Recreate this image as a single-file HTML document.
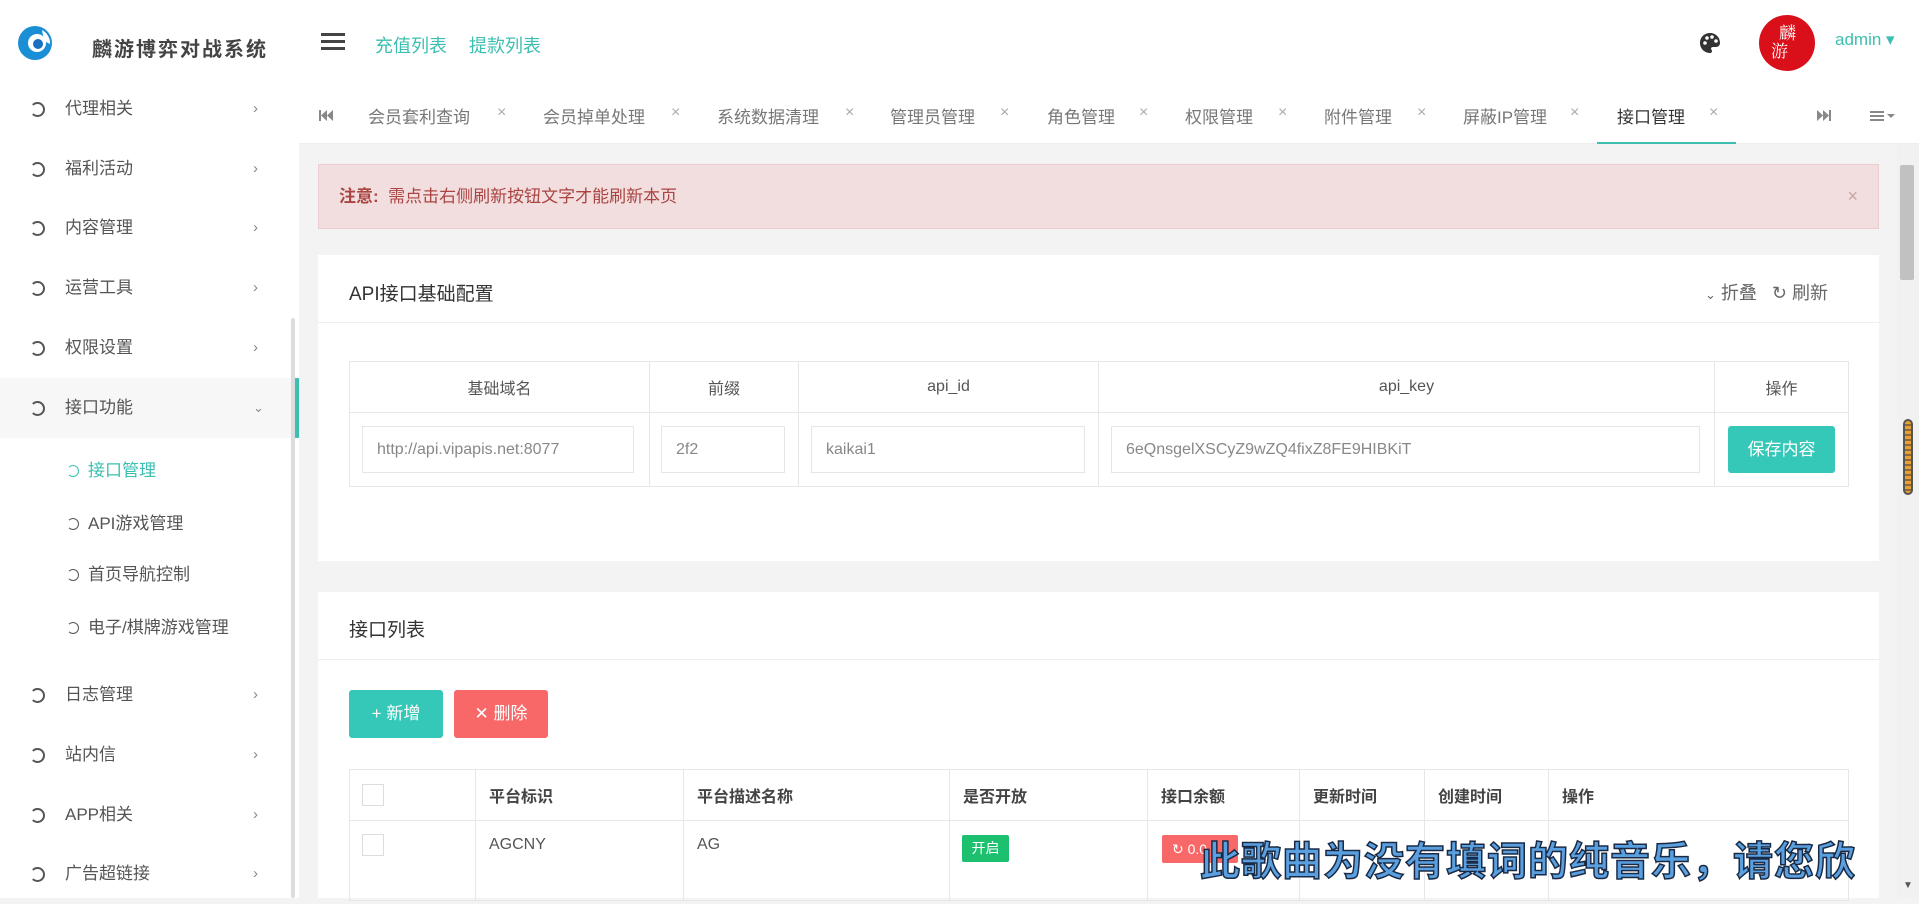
<!DOCTYPE html>
<html><head><meta charset="utf-8"><style>
*{margin:0;padding:0;box-sizing:border-box}
body{width:1919px;height:898px;overflow:hidden;background:#f3f3f4;font-family:"Liberation Sans","Noto Sans CJK SC",sans-serif;color:#555;position:relative;font-size:17px}
.a{position:absolute;white-space:nowrap}
.teal{color:#3cbfb0}
#side{position:absolute;left:0;top:0;width:299px;height:898px;background:#fff}
.mi{position:absolute;left:0;width:294px;height:60px;line-height:60px;font-size:17px;color:#555;white-space:nowrap}
.mi .ic{position:absolute;left:30px;top:23px;width:15px;height:15px;border:2px solid #555;border-radius:50%;border-left-color:transparent}
.mi .t{position:absolute;left:65px}
.mi .ch{position:absolute;left:253px;color:#888;font-size:15px}
.si{position:absolute;left:0;width:294px;height:40px;line-height:40px;font-size:17px;color:#555;white-space:nowrap}
.si .ic{position:absolute;left:67px;top:14px;width:12px;height:12px;border:1.5px solid #555;border-radius:50%;border-left-color:transparent}
.si .t{position:absolute;left:88px}
.tab{position:absolute;top:103px;font-size:17px;color:#777;white-space:nowrap}
.x{position:absolute;top:104px;font-size:16px;color:#aaa}
.panel{position:absolute;left:318px;width:1561px;background:#fff}
table{border-collapse:collapse;position:absolute}
td,th{border:1px solid #e7e7e7}
.inp{position:absolute;height:47px;border:1px solid #e5e6e7;line-height:45px;padding-left:14px;color:#888;font-size:16px;top:426px;white-space:nowrap}
</style></head><body>
<div class="a" style="left:299px;top:0;width:1620px;height:86px;background:#fff"></div>
<div id="side">
<svg class="a" style="left:16px;top:24px" width="38" height="38" viewBox="0 0 38 38"><circle cx="19" cy="19" r="17" fill="#1a8fd6"/><circle cx="21" cy="19" r="9" fill="#fff"/><circle cx="22" cy="20" r="5" fill="#1a6fc0"/><path d="M26 6 A15 15 0 0 1 34 20 L28 17 Z" fill="#fff"/></svg>
<div class="a" style="left:92px;top:33px;font-size:20px;font-weight:bold;color:#444;letter-spacing:2px">麟游博弈对战系统</div>
<div class="mi" style="top:79px"><span class="ic"></span><span class="t">代理相关</span><span class="ch">›</span></div>
<div class="mi" style="top:139px"><span class="ic"></span><span class="t">福利活动</span><span class="ch">›</span></div>
<div class="mi" style="top:198px"><span class="ic"></span><span class="t">内容管理</span><span class="ch">›</span></div>
<div class="mi" style="top:258px"><span class="ic"></span><span class="t">运营工具</span><span class="ch">›</span></div>
<div class="mi" style="top:318px"><span class="ic"></span><span class="t">权限设置</span><span class="ch">›</span></div>
<div class="mi" style="top:378px;background:#f7f7f7;border-right:5px solid #3cbfb0;width:299px"><span class="ic"></span><span class="t">接口功能</span><span class="ch" style="font-size:13px">⌄</span></div>
<div class="si" style="top:451px;color:#3cbfb0"><span class="ic" style="border-color:#3cbfb0;border-left-color:transparent"></span><span class="t">接口管理</span></div>
<div class="si" style="top:504px"><span class="ic"></span><span class="t">API游戏管理</span></div>
<div class="si" style="top:555px"><span class="ic"></span><span class="t">首页导航控制</span></div>
<div class="si" style="top:608px"><span class="ic"></span><span class="t">电子/棋牌游戏管理</span></div>
<div class="mi" style="top:665px"><span class="ic"></span><span class="t">日志管理</span><span class="ch">›</span></div>
<div class="mi" style="top:725px"><span class="ic"></span><span class="t">站内信</span><span class="ch">›</span></div>
<div class="mi" style="top:785px"><span class="ic"></span><span class="t">APP相关</span><span class="ch">›</span></div>
<div class="mi" style="top:844px"><span class="ic"></span><span class="t">广告超链接</span><span class="ch">›</span></div>
<div class="a" style="left:291px;top:318px;width:4px;height:580px;background:#ddd;border-radius:2px"></div>
</div>
<div class="a" style="left:321px;top:33px;width:24px;height:3px;background:#444;box-shadow:0 7px 0 #444,0 14px 0 #444"></div>
<div class="a teal" style="left:375px;top:32px;font-size:18px">充值列表</div>
<div class="a teal" style="left:469px;top:32px;font-size:18px">提款列表</div>
<svg class="a" style="left:1699px;top:32px" width="22" height="22" viewBox="0 0 22 22"><path d="M11 1C5 1 1 5.5 1 11s4.5 10 10 10c1.5 0 2-1 2-2s-1-1.5-1-2.5 1-1.5 2-1.5h3c2.5 0 4-2 4-4C21 5 16.5 1 11 1z" fill="#333"/><circle cx="6" cy="11" r="1.8" fill="#fff"/><circle cx="8" cy="6" r="1.8" fill="#fff"/><circle cx="13" cy="5" r="1.8" fill="#fff"/><circle cx="17" cy="9" r="1.8" fill="#fff"/></svg>
<div class="a" style="left:1759px;top:15px;width:56px;height:56px;border-radius:50%;background:#d9101a;color:#fff;font-family:'Noto Serif CJK SC',serif;font-size:17px;line-height:18px;padding:8px 0 0 20px">麟<br><span style="margin-left:-8px">游</span></div>
<div class="a teal" style="left:1835px;top:30px;font-size:17px">admin ▾</div>
<div class="a" style="left:299px;top:86px;width:1620px;height:58px;background:#fff;border-bottom:1px solid #eee"></div>
<svg class="a" style="left:319px;top:110px" width="14" height="11" viewBox="0 0 14 11"><rect x="0" y="0" width="2" height="11" fill="#888"/><path d="M8 0 L2 5.5 L8 11Z M14 0 L8 5.5 L14 11Z" fill="#888"/></svg>
<div class="tab" style="left:368px">会员套利查询</div><div class="x" style="left:497px">×</div>
<div class="tab" style="left:543px">会员掉单处理</div><div class="x" style="left:671px">×</div>
<div class="tab" style="left:717px">系统数据清理</div><div class="x" style="left:845px">×</div>
<div class="tab" style="left:890px">管理员管理</div><div class="x" style="left:1000px">×</div>
<div class="tab" style="left:1047px">角色管理</div><div class="x" style="left:1139px">×</div>
<div class="tab" style="left:1185px">权限管理</div><div class="x" style="left:1278px">×</div>
<div class="tab" style="left:1324px">附件管理</div><div class="x" style="left:1417px">×</div>
<div class="tab" style="left:1463px">屏蔽IP管理</div><div class="x" style="left:1570px">×</div>
<div class="tab" style="left:1617px;color:#333">接口管理</div><div class="x" style="left:1709px">×</div>
<div class="a" style="left:1597px;top:142px;width:139px;height:2px;background:#3cbfb0"></div>
<svg class="a" style="left:1817px;top:110px" width="14" height="11" viewBox="0 0 14 11"><path d="M0 0 L6 5.5 L0 11Z M6 0 L12 5.5 L6 11Z" fill="#888"/><rect x="12" y="0" width="2" height="11" fill="#888"/></svg>
<svg class="a" style="left:1870px;top:110px" width="26" height="12" viewBox="0 0 26 12"><rect x="0" y="1" width="14" height="2" fill="#888"/><rect x="0" y="5" width="14" height="2" fill="#888"/><rect x="0" y="9" width="14" height="2" fill="#888"/><path d="M17 4 L25 4 L21 8Z" fill="#888"/></svg>
<div class="a" style="left:318px;top:164px;width:1561px;height:65px;background:#f2dede;border:1px solid #ebccd1;color:#a94442;font-size:17px;line-height:63px;padding-left:20px"><b>注意:</b>&nbsp; 需点击右侧刷新按钮文字才能刷新本页<span style="position:absolute;right:20px;color:#c9a3a3;font-size:18px">×</span></div>
<div class="panel" style="top:255px;height:306px">
<div class="a" style="left:31px;top:24px;font-size:19px;color:#333">API接口基础配置</div>
<div class="a" style="left:1387px;top:24px;font-size:18px;color:#666"><span style="font-size:13px">⌄</span> 折叠 &nbsp; ↻ 刷新</div>
<div class="a" style="left:0;top:67px;width:1561px;height:1px;background:#eee"></div>
</div>
<table style="left:349px;top:361px;width:1500px;font-size:16px;color:#555">
<tr style="height:51px;text-align:center"><td style="width:300px">基础域名</td><td style="width:149px">前缀</td><td style="width:300px">api_id</td><td style="width:616px">api_key</td><td>操作</td></tr>
<tr style="height:74px"><td></td><td></td><td></td><td></td><td></td></tr>
</table>
<div class="inp" style="left:362px;width:272px">http://api.vipapis.net:8077</div>
<div class="inp" style="left:661px;width:124px">2f2</div>
<div class="inp" style="left:811px;width:274px">kaikai1</div>
<div class="inp" style="left:1111px;width:589px">6eQnsgelXSCyZ9wZQ4fixZ8FE9HIBKiT</div>
<div class="a" style="left:1728px;top:426px;width:107px;height:47px;background:#35c8b8;color:#fff;border-radius:3px;font-size:17px;line-height:47px;text-align:center">保存内容</div>
<div class="panel" style="top:592px;height:306px">
<div class="a" style="left:31px;top:23px;font-size:19px;color:#333">接口列表</div>
<div class="a" style="left:0;top:67px;width:1561px;height:1px;background:#eee"></div>
</div>
<div class="a" style="left:349px;top:690px;width:94px;height:48px;background:#35c8b8;color:#fff;border-radius:3px;font-size:17px;line-height:48px;text-align:center">+ 新增</div>
<div class="a" style="left:454px;top:690px;width:94px;height:48px;background:#f96868;color:#fff;border-radius:3px;font-size:17px;line-height:48px;text-align:center">✕ 删除</div>
<table style="left:349px;top:769px;width:1500px;font-size:16px;color:#555">
<tr style="height:51px;font-weight:bold;color:#444;text-align:left"><td style="width:126px"></td><td style="width:208px;padding-left:13px">平台标识</td><td style="width:266px;padding-left:13px">平台描述名称</td><td style="width:198px;padding-left:13px">是否开放</td><td style="width:152px;padding-left:13px">接口余额</td><td style="width:125px;padding-left:13px">更新时间</td><td style="width:124px;padding-left:13px">创建时间</td><td style="padding-left:13px">操作</td></tr>
<tr style="height:80px;vertical-align:top"><td></td><td style="padding:15px 13px">AGCNY</td><td style="padding:15px 13px">AG</td><td></td><td></td><td></td><td></td><td></td></tr>
</table>
<div class="a" style="left:362px;top:784px;width:22px;height:22px;border:1px solid #ddd"></div>
<div class="a" style="left:362px;top:834px;width:22px;height:22px;border:1px solid #ddd"></div>
<div class="a" style="left:962px;top:835px;width:47px;height:27px;background:#1cc06f;color:#fff;border-radius:2px;font-size:14px;line-height:27px;text-align:center">开启</div>
<div class="a" style="left:1162px;top:835px;width:76px;height:28px;background:#f96868;color:#fff;border-radius:2px;font-size:14px;line-height:28px;padding-left:10px">↻ 0.0</div>
<div class="a" style="left:1200px;top:829px;width:655px;height:56px;overflow:hidden;font-size:40px;font-weight:bold;color:#5aa0e0;-webkit-text-stroke:1.5px #1a2a44;letter-spacing:1px">此歌曲为没有填词的纯音乐，请您欣赏</div>
<div class="a" style="left:1897px;top:144px;width:22px;height:754px;background:#f1f1f1"></div>
<div class="a" style="left:1900px;top:165px;width:14px;height:115px;background:#c1c1c1;border-radius:2px"></div>
<div class="a" style="left:1903px;top:419px;width:10px;height:76px;background:repeating-linear-gradient(#e8a030 0 3px,#8a6a3a 3px 5px);border-radius:5px;border:2px solid #555"></div>
<div class="a" style="left:1903px;top:880px;font-size:10px;color:#555">▼</div>
</body></html>
